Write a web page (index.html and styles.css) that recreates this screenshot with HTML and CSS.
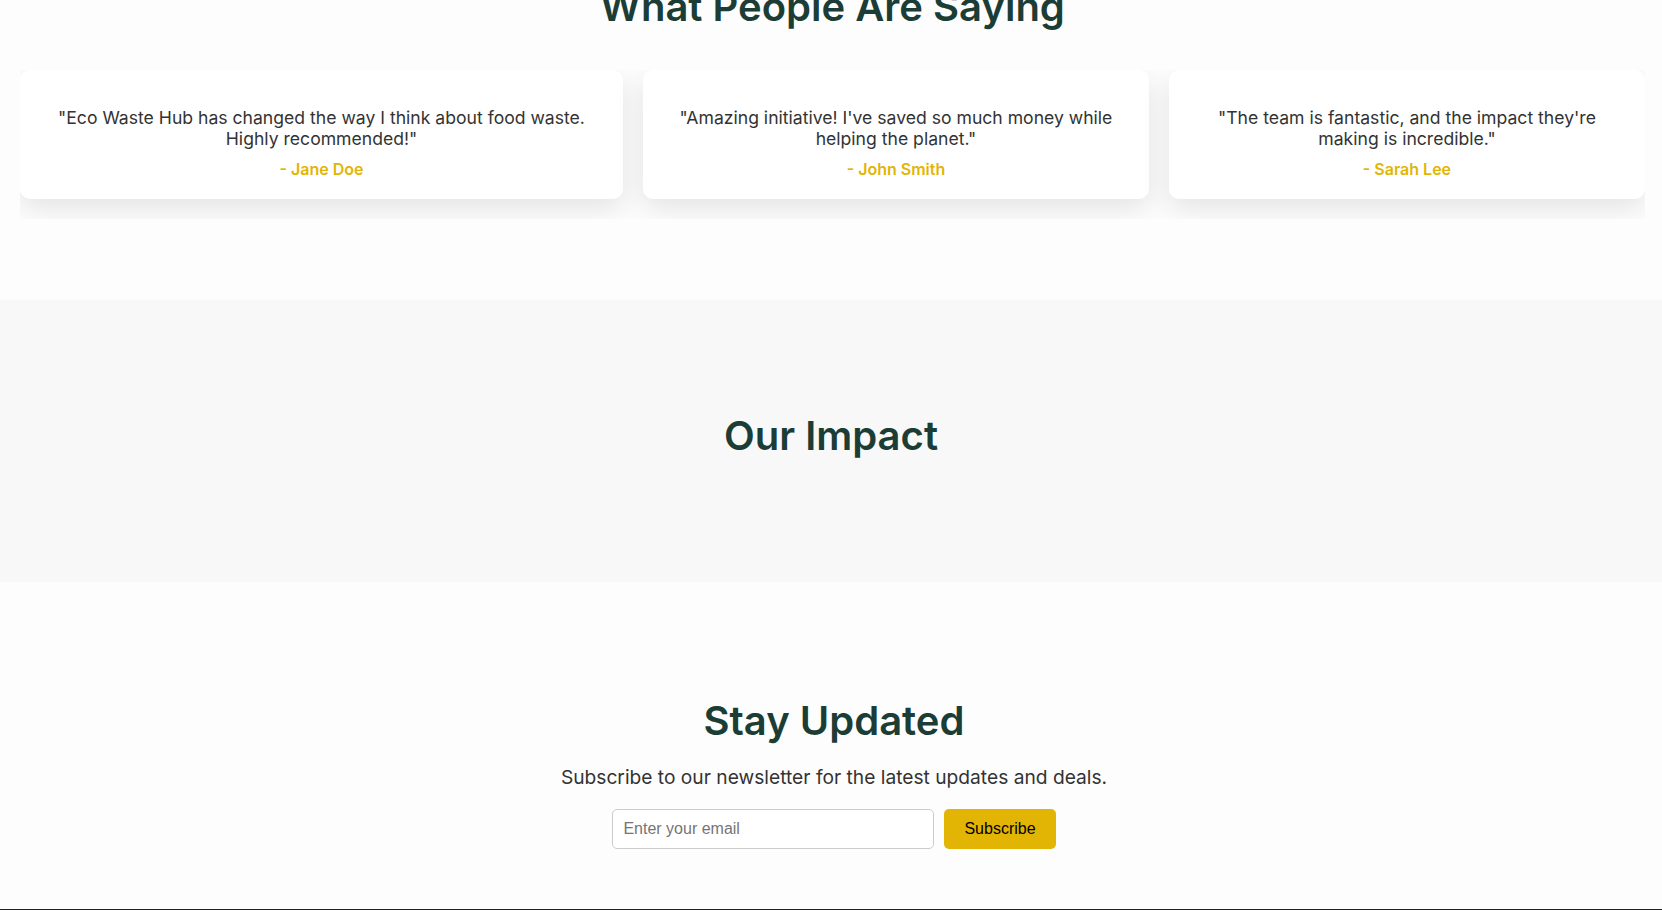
FILE: index.html
```html
<!DOCTYPE html>
<html lang="en">
<head>
<meta charset="UTF-8">
<title>Eco Waste Hub</title>
<link rel="stylesheet" href="styles.css">
</head>
<body>
  <section class="testimonials">
    <h2 class="section-title testimonials-title">What People Are Saying</h2>
    <div class="testimonial-track">
      <div class="testimonial-card">
        <p class="quote">"Eco Waste Hub has changed the way I think about food waste. Highly recommended!"</p>
        <p class="author">- Jane Doe</p>
      </div>
      <div class="testimonial-card">
        <p class="quote">"Amazing initiative! I've saved so much money while helping the planet."</p>
        <p class="author">- John Smith</p>
      </div>
      <div class="testimonial-card">
        <p class="quote">"The team is fantastic, and the impact they're making is incredible."</p>
        <p class="author">- Sarah Lee</p>
      </div>
    </div>
  </section>

  <section class="impact">
    <h2 class="section-title">Our Impact</h2>
  </section>

  <section class="newsletter">
    <h2 class="section-title newsletter-title">Stay Updated</h2>
    <p class="newsletter-text">Subscribe to our newsletter for the latest updates and deals.</p>
    <form class="newsletter-form">
      <input class="email-input" type="email" placeholder="Enter your email">
      <button class="subscribe-btn" type="button">Subscribe</button>
    </form>
  </section>

  <footer class="site-footer"></footer>
</body>
</html>
```

FILE: styles.css
```css
* {
  box-sizing: border-box;
}

html, body {
  margin: 0;
  padding: 0;
}

body {
  background: #fdfdfd;
  font-family: Inter, "Noto Sans", Arial, sans-serif;
  color: #333;
  overflow: hidden;
}

.section-title {
  font-size: 40px;
  font-weight: 600;
  line-height: 48px;
  color: #1b3d36;
  text-align: center;
  margin: 0;
}

/* Testimonials */
.testimonials {
  padding: 0 17px 81px 20px;
}

.testimonials-title {
  margin-top: -17px;
  margin-bottom: 39px;
}

.testimonial-track {
  display: flex;
  gap: 20px;
  overflow-x: auto;
  padding-bottom: 20px;
}

.testimonial-card {
  flex: 1 1 auto;
  background: #fff;
  border-radius: 10px;
  padding: 20px;
  text-align: center;
  box-shadow: 0 10px 28px rgba(0, 0, 0, 0.1);
}

.quote {
  font-size: 17.6px;
  line-height: 21px;
  margin: 17px 0 11px;
  color: #333;
}

.author {
  margin: 0;
  font-size: 16px;
  line-height: 19px;
  font-weight: 600;
  color: #e2b505;
}

/* Impact */
.impact {
  background: #f8f8f8;
  padding: 112px 20px 122px;
}

/* Newsletter */
.newsletter {
  padding: 115px 17px 60px 23px;
  text-align: center;
}

.newsletter-text {
  font-size: 19.2px;
  line-height: 22px;
  margin: 21px 0 21px;
  color: #333;
}

.newsletter-form {
  display: flex;
  justify-content: center;
  gap: 10px;
}

.email-input {
  width: 322px;
  height: 40px;
  padding: 10px;
  border: 1px solid #ccc;
  border-radius: 5px;
  font-family: "Liberation Sans", Arial, sans-serif;
  font-size: 16px;
  background: #fff;
}

.email-input::placeholder {
  color: #757575;
}

.subscribe-btn {
  height: 40px;
  padding: 0 20px;
  border: none;
  border-radius: 5px;
  background: #e2b505;
  color: #000;
  font-family: "Liberation Sans", Arial, sans-serif;
  font-size: 16px;
  cursor: pointer;
}

.site-footer {
  background: #222;
  height: 40px;
}
```
